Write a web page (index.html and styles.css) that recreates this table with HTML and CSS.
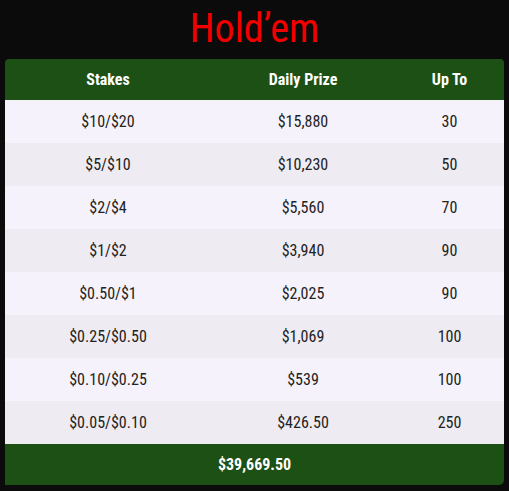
FILE: index.html
```html
<!DOCTYPE html>
<html>
<head>
<meta charset="utf-8">
<link rel="stylesheet" href="styles.css">
</head>
<body>
<h1 class="title">Hold’em</h1>
<div class="table">
  <div class="row head"><div>Stakes</div><div>Daily Prize</div><div>Up To</div></div>
  <div class="row"><div>$10/$20</div><div>$15,880</div><div>30</div></div>
  <div class="row"><div>$5/$10</div><div>$10,230</div><div>50</div></div>
  <div class="row"><div>$2/$4</div><div>$5,560</div><div>70</div></div>
  <div class="row"><div>$1/$2</div><div>$3,940</div><div>90</div></div>
  <div class="row"><div>$0.50/$1</div><div>$2,025</div><div>90</div></div>
  <div class="row"><div>$0.25/$0.50</div><div>$1,069</div><div>100</div></div>
  <div class="row"><div>$0.10/$0.25</div><div>$539</div><div>100</div></div>
  <div class="row"><div>$0.05/$0.10</div><div>$426.50</div><div>250</div></div>
  <div class="foot">$39,669.50</div>
</div>
</body>
</html>
```
FILE: styles.css
```css
html, body { margin: 0; padding: 0; }
body {
  background: #0b0b0b;
  font-family: Roboto, "Liberation Sans", sans-serif;
  font-stretch: 75%;
  padding: 0 5px 6px;
}
.title {
  margin: 0;
  height: 59px;
  line-height: 58px;
  text-align: center;
  color: #f20000;
  font-weight: 400;
  font-size: 40px;
}
.table { width: 499px; }
.row {
  display: grid;
  grid-template-columns: 206px 184px 109px;
  height: 43px;
  align-items: center;
  text-align: center;
  font-size: 16px;
  color: #222;
  background: #f5f2fb;
}
.row:nth-child(odd) { background: #eeebf3; }
.row.head {
  height: 41px;
  background: #1c5014;
  color: #fff;
  font-weight: 700;
  font-size: 16px;
  border-radius: 4px 4px 0 0;
}
.foot {
  height: 41px;
  line-height: 41px;
  background: #1c5014;
  color: #fff;
  font-weight: 700;
  font-size: 16px;
  text-align: center;
  border-radius: 0 0 5px 0;
}
```
